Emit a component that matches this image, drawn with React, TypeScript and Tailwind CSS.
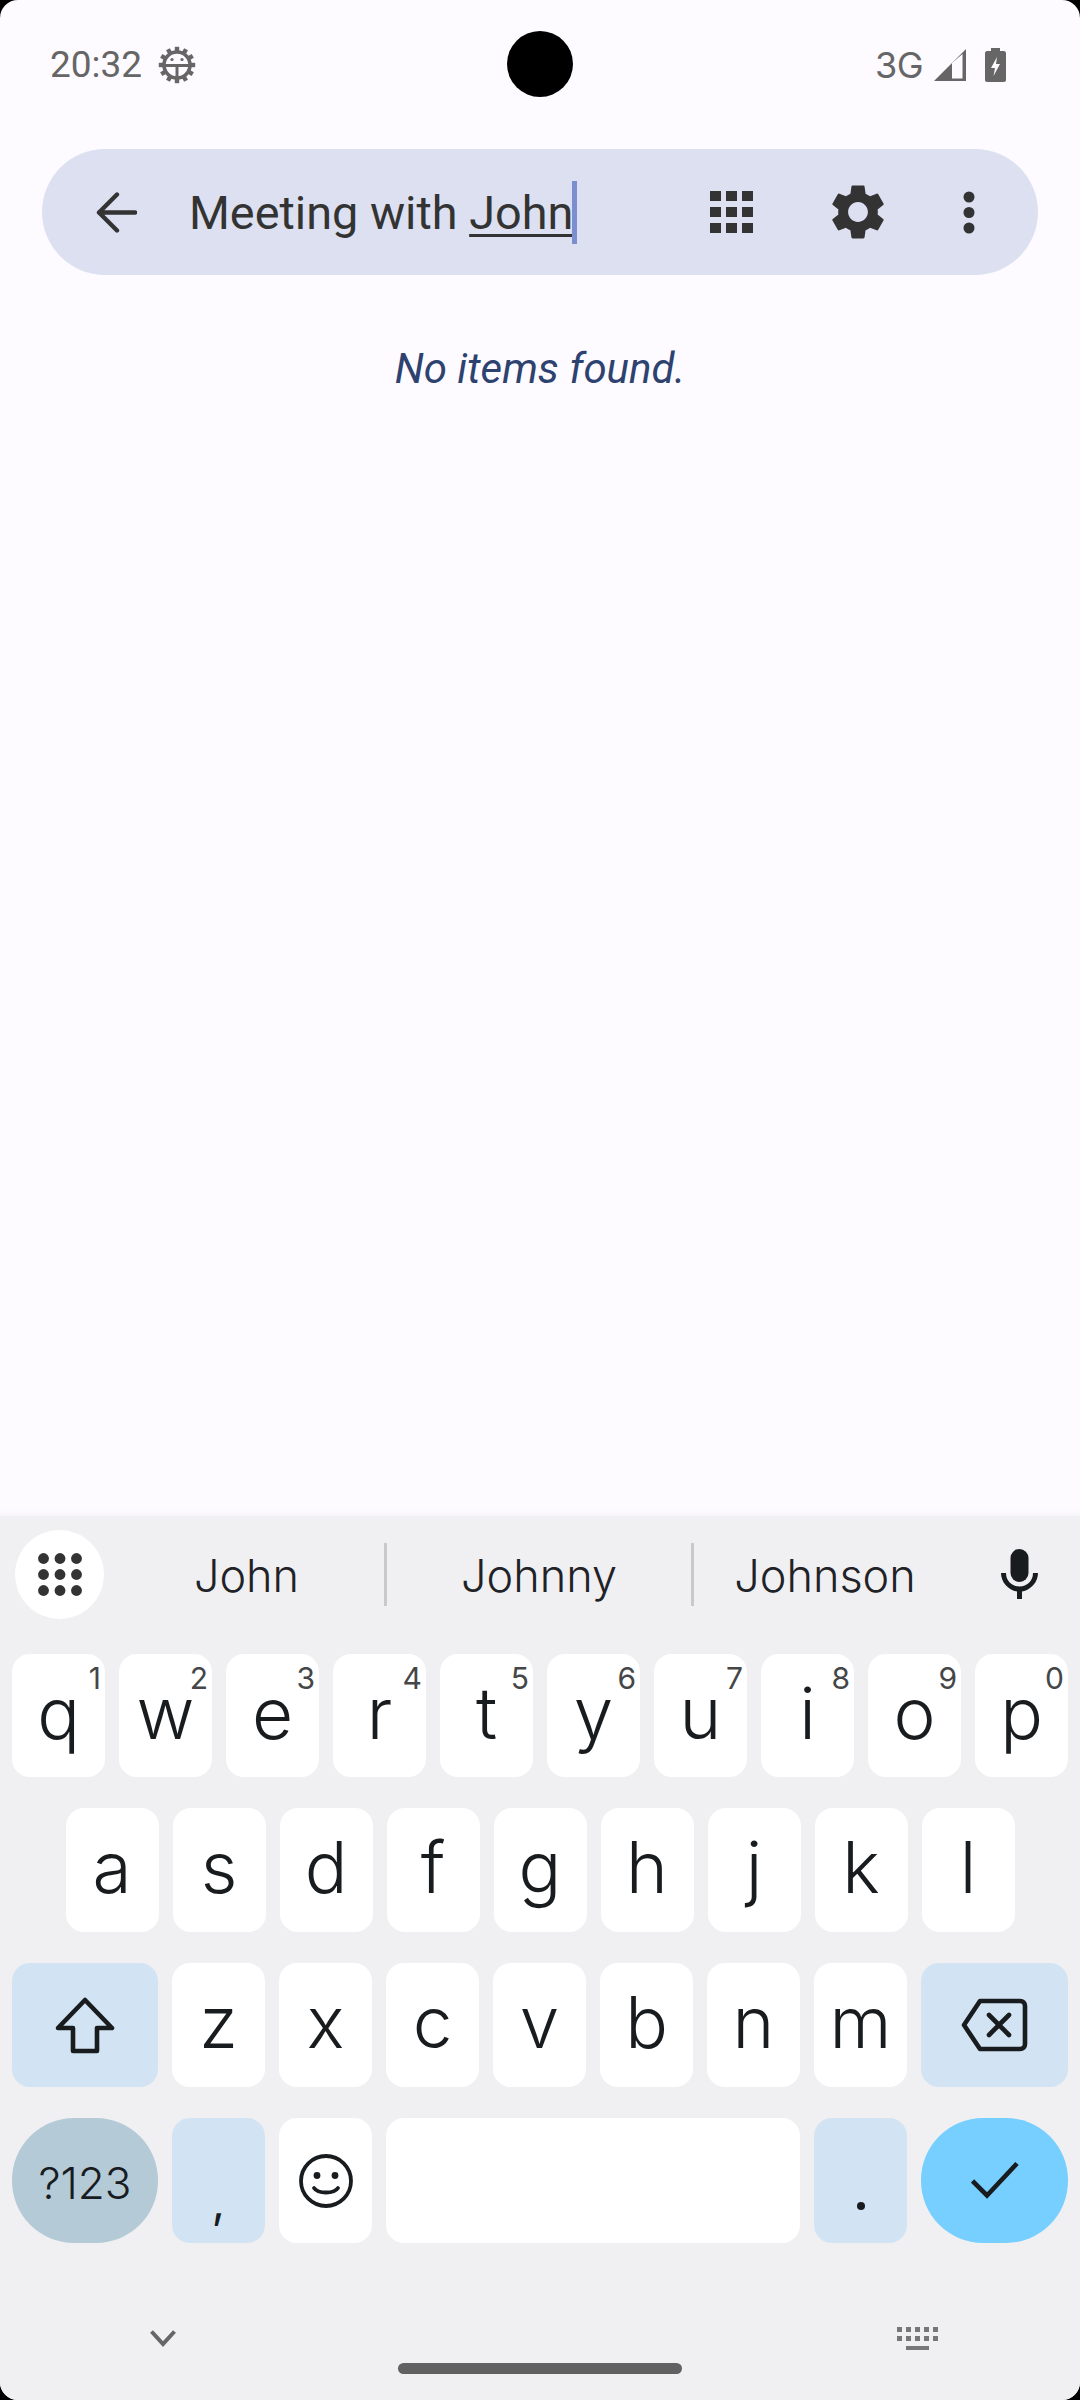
const keyFont = { fontFamily: "Inter, sans-serif" };

function Key({ label, digit, short }: { label: string; digit?: string; short?: boolean }) {
  return (
    <div className={`relative w-[93px] ${short ? "h-[123px]" : "h-[124px]"} rounded-[18px] bg-white flex justify-center pt-[24px] text-[71px] leading-[70px] font-[350] text-[#191c1f]`}>
      {label}
      {digit && (
        <span className="absolute right-[4px] top-[9px] text-[30px] leading-[30px] font-normal text-[#444648]">{digit}</span>
      )}
    </div>
  );
}

function Suggestion({ text, className }: { text: string; className: string }) {
  return (
    <div className={`flex justify-center text-[45px] leading-[50px] font-[350] pt-[2px] text-[#1f2226] ${className}`}>{text}</div>
  );
}

export default function App() {
  return (
    <div className="relative w-[1080px] h-[2400px] bg-black overflow-hidden" style={{ fontFamily: "Roboto, sans-serif" }}>
      <div className="flex flex-col w-full h-full rounded-[18px] overflow-hidden bg-[#fdfbff]">
        {/* status bar */}
        <div className="flex items-center h-[64px] mt-[33px] pl-[50px] pr-[74px] text-[#666666]">
          <span className="text-[37px] leading-[40px]">20:32</span>
          <svg className="ml-[16px]" width="38" height="38" viewBox="0 0 38 38">
            <g fill="#666666">
              {[0, 30, 60, 90, 120, 150, 180, 210, 240, 270, 300, 330].map((a) => (
                <rect key={a} x="16.8" y="0.8" width="4.4" height="6" transform={`rotate(${a} 19 19)`} />
              ))}
            </g>
            <circle cx="19" cy="19" r="13" fill="none" stroke="#666666" strokeWidth="3.6" />
            <path d="M6 19.5H32M19 19.5V32" stroke="#666666" strokeWidth="3" fill="none" />
            <circle cx="14" cy="13.5" r="1.6" fill="#666666" />
            <circle cx="24" cy="13.5" r="1.6" fill="#666666" />
          </svg>
          <span className="ml-auto text-[36px] leading-[40px] tracking-[-0.5px]" style={{ fontFamily: "Inter, sans-serif" }}>3G</span>
          <svg className="ml-[10px]" width="34" height="34" viewBox="0 0 34 34">
            <path d="M1 33L33 1V33Z" fill="#666666" />
            <path d="M19 30.5V15L29.5 6V30.5Z" fill="#fdfbff" />
          </svg>
          <svg className="ml-[18px]" width="21" height="34" viewBox="0 0 21 34">
            <path d="M6 0H15V3H19C20 3 21 4 21 5V32C21 33 20 34 19 34H2C1 34 0 33 0 32V5C0 4 1 3 2 3H6Z" fill="#666666" />
            <path d="M12 9L6 20H10L8.5 28L15 16H11Z" fill="#fdfbff" />
          </svg>
        </div>

        {/* search bar */}
        <div className="flex items-center ml-[42px] mt-[52px] w-[996px] h-[126px] rounded-[63px] bg-[#dce0f0] text-[#333333]">
          <svg className="ml-[54px]" width="41" height="41" viewBox="0 0 41 41" fill="none" stroke="#333333" strokeWidth="4.4" strokeLinecap="round" strokeLinejoin="round">
            <path d="M39 20.5H3M21 2.5L3 20.5L21 38.5" />
          </svg>
          <div className="ml-[52px] flex items-center w-[402px] h-[63px]">
            <span className="text-[46.8px] leading-[63px] whitespace-pre pt-[2px]">
              Meeting with <span className="underline decoration-[2.5px] underline-offset-[5px]">John</span>
            </span>
            <span className="w-[5px] h-[63px] bg-[#7b8fcf] -ml-[1px]" />
          </div>
          <svg className="ml-[119px]" width="43" height="42" viewBox="0 0 43 42" fill="#333333">
            {[0, 16, 32].map((x) =>
              [0, 16, 32].map((y) => <rect key={`${x}-${y}`} x={x} y={y} width="11" height="10" />)
            )}
          </svg>
          <svg className="ml-[72px]" width="66" height="66" viewBox="0 0 24 24" fill="#333333">
            <path d="M19.14 12.94c.04-.3.06-.61.06-.94 0-.32-.02-.64-.07-.94l2.03-1.58c.18-.14.23-.41.12-.61l-1.92-3.32c-.12-.22-.37-.29-.59-.22l-2.39.96c-.5-.38-1.03-.7-1.62-.94l-.36-2.54c-.04-.24-.24-.41-.48-.41h-3.84c-.24 0-.43.17-.47.41l-.36 2.54c-.59.24-1.13.57-1.62.94l-2.39-.96c-.22-.08-.47 0-.59.22L2.74 8.87c-.12.21-.08.47.12.61l2.03 1.58c-.05.3-.09.63-.09.94s.02.64.07.94l-2.03 1.58c-.18.14-.23.41-.12.61l1.92 3.32c.12.22.37.29.59.22l2.39-.96c.5.38 1.03.7 1.62.94l.36 2.54c.05.24.24.41.48.41h3.84c.24 0 .44-.17.47-.41l.36-2.54c.59-.24 1.13-.56 1.62-.94l2.39.96c.22.08.47 0 .59-.22l1.92-3.32c.12-.22.07-.47-.12-.61l-2.01-1.58zM12 15.6c-1.98 0-3.6-1.62-3.6-3.6s1.62-3.6 3.6-3.6 3.6 1.62 3.6 3.6-1.62 3.6-3.6 3.6z" />
          </svg>
          <svg className="ml-[72px]" width="12" height="43" viewBox="0 0 12 43" fill="#333333">
            <circle cx="6" cy="6" r="5.5" />
            <circle cx="6" cy="21.5" r="5.5" />
            <circle cx="6" cy="37" r="5.5" />
          </svg>
        </div>

        {/* empty state */}
        <p className="mt-[70px] text-center italic text-[42px] leading-[48px] text-[#2e4270]">No items found.</p>

        <div className="flex-1" />
        <div className="h-[6px] bg-gradient-to-b from-[#fdfbff] to-[#f7f5f8]" />

        {/* keyboard */}
        <div className="h-[884px] bg-[#f0f0f2] flex flex-col" style={keyFont}>
          <div className="relative flex items-center h-[138px] pt-[14px] pb-[35px]">
            <div className="ml-[15px] w-[89px] h-[89px] rounded-full bg-white flex items-center justify-center">
              <svg width="44" height="43" viewBox="0 0 44 43" fill="#333333">
                {[5.5, 22, 38.5].map((x) =>
                  [5.5, 21.5, 37.5].map((y) => <circle key={`${x}-${y}`} cx={x} cy={y} r="5.4" />)
                )}
              </svg>
            </div>
            <Suggestion text="John" className="w-[280px] pl-[5px]" />
            <div className="w-[3px] h-[63px] bg-[#c8c9cb]" />
            <Suggestion text="Johnny" className="w-[304px]" />
            <div className="w-[3px] h-[63px] bg-[#c8c9cb]" />
            <Suggestion text="Johnson" className="w-[270px] -ml-[4px]" />
            <svg className="absolute left-[1001px] top-[33px]" width="37" height="50" viewBox="0 0 37 50" fill="#191c1f">
              <rect x="9.5" y="0" width="18" height="33" rx="9" />
              <path d="M0 24H5C5 32 11 37.5 18.5 37.5C26 37.5 32 32 32 24H37C37 33 30 41 21 42.5V50H16V42.5C7 41 0 33 0 24Z" />
            </svg>
          </div>

          <div className="flex flex-col gap-[31px]">
            <div className="flex justify-center gap-[14px]">
              {["q1", "w2", "e3", "r4", "t5", "y6", "u7", "i8", "o9", "p0"].map((k) => (
                <Key key={k} label={k[0]} digit={k[1]} short />
              ))}
            </div>
            <div className="flex justify-center gap-[14px]">
              {["a", "s", "d", "f", "g", "h", "j", "k", "l"].map((k) => (
                <Key key={k} label={k} />
              ))}
            </div>
            <div className="flex justify-center gap-[14px]">
              <div className="w-[146px] h-[124px] rounded-[18px] bg-[#d2e4f3] flex items-center justify-center">
                <svg width="60" height="57" viewBox="0 0 60 57" fill="none" stroke="#191c1f" strokeWidth="4.6" strokeLinejoin="round">
                  <path d="M30 3L57 31H42V54H18V31H3Z" />
                </svg>
              </div>
              {["z", "x", "c", "v", "b", "n", "m"].map((k) => (
                <Key key={k} label={k} />
              ))}
              <div className="w-[147px] h-[124px] rounded-[18px] bg-[#d2e4f3] flex items-center justify-center">
                <svg width="67" height="54" viewBox="0 0 67 54" fill="none" stroke="#191c1f" strokeWidth="4.6" strokeLinecap="round" strokeLinejoin="round">
                  <path d="M19 3H59C62 3 64 5 64 8V46C64 49 62 51 59 51H19L3 27Z" />
                  <path d="M28 17L48 37M48 17L28 37" />
                </svg>
              </div>
            </div>
            <div className="flex justify-center gap-[14px] text-[#191c1f]">
              <div className="w-[146px] h-[125px] rounded-[62px] bg-[#b4cad7] flex items-center justify-center text-[44px] leading-[50px] font-[350] pt-[5px]">?123</div>
              <div className="w-[93px] h-[125px] rounded-[18px] bg-[#d2e4f3] flex justify-center pt-[58px] text-[46px] leading-[50px]">,</div>
              <div className="w-[93px] h-[125px] rounded-[18px] bg-white flex items-center justify-center">
                <svg width="54" height="54" viewBox="0 0 54 54" fill="none" stroke="#191c1f" strokeWidth="3.8" strokeLinecap="round">
                  <circle cx="27" cy="27" r="25" />
                  <path d="M15 34C19 40 35 40 39 34" />
                  <circle cx="18" cy="21.5" r="3.4" fill="#191c1f" stroke="none" />
                  <circle cx="36" cy="21.5" r="3.4" fill="#191c1f" stroke="none" />
                </svg>
              </div>
              <div className="w-[414px] h-[125px] rounded-[18px] bg-white" />
              <div className="w-[93px] h-[125px] rounded-[18px] bg-[#d2e4f3] flex justify-center pt-[84px]">
                <span className="w-[8px] h-[8px] rounded-full bg-[#191c1f]" />
              </div>
              <div className="w-[147px] h-[125px] rounded-[62px] bg-[#76cfff] flex items-center justify-center">
                <svg width="48" height="37" viewBox="0 0 48 37" fill="none" stroke="#191c1f" strokeWidth="4.6">
                  <path d="M1.5 19L16 33.5L46 1.5" />
                </svg>
              </div>
            </div>
          </div>

          {/* navigation */}
          <div className="relative flex-1">
            <svg className="absolute left-[150px] top-[87px]" width="26" height="17" viewBox="0 0 26 17" fill="none" stroke="#666666" strokeWidth="4">
              <path d="M1.5 1.5L13 14L24.5 1.5" />
            </svg>
            <svg className="absolute left-[897px] top-[84px]" width="41" height="23" viewBox="0 0 41 23" fill="#777777">
              {[0, 9, 18, 27, 36].map((x) => (
                <g key={x}>
                  <rect x={x} y="0" width="5" height="5" />
                  <rect x={x} y="9" width="5" height="5" />
                </g>
              ))}
              <rect x="9" y="19" width="23" height="4" />
            </svg>
            <div className="absolute left-[398px] top-[120px] w-[284px] h-[11px] rounded-full bg-[#616161]" />
          </div>
        </div>
      </div>

      {/* camera cutout */}
      <div className="absolute left-[507px] top-[31px] w-[66px] h-[66px] rounded-full bg-black" />
    </div>
  );
}
